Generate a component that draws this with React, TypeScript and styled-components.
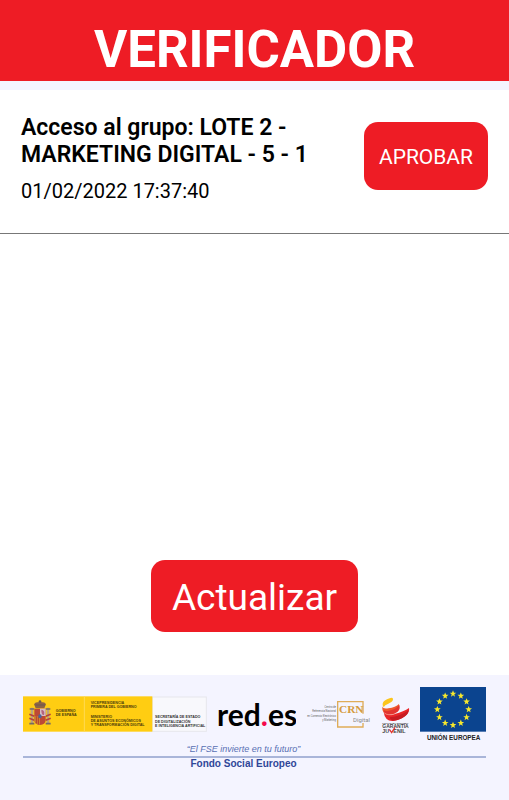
import React from 'react';
import styled, { createGlobalStyle } from 'styled-components';

const red = '#ee1c25';
const pale = '#f4f4ff';

const GlobalStyle = createGlobalStyle`
  * { box-sizing: border-box; }
  body { margin: 0; background: #fff; color: #000; font-family: Roboto, "Liberation Sans", sans-serif; }
`;

const Page = styled.div`
  display: flex;
  flex-direction: column;
  min-height: 100vh;
`;

const Header = styled.header`
  padding: 21px 16px 2px;
  background: ${red};
  border-bottom: 9px solid ${pale};
  text-align: center;
`;

const Title = styled.h1`
  margin: 0;
  color: #fff;
  font-size: 51px;
  line-height: 58px;
  font-weight: 700;
`;

const RequestList = styled.ul`
  flex: 1;
  margin: 0;
  padding: 0;
  list-style: none;
`;

const Request = styled.li`
  display: flex;
  align-items: flex-start;
  justify-content: space-between;
  gap: 32px;
  padding: 24px 21px 26px;
  border-bottom: 1px solid #777;
`;

const RequestInfo = styled.div`
  flex: 1;
  max-width: 300px;
`;

const RequestTitle = styled.h2`
  margin: 0 0 8px;
  font-size: 23px;
  line-height: 27px;
  font-weight: 600;
`;

const RequestDate = styled.time`
  display: block;
  font-size: 20px;
  line-height: 31px;
`;

const RequestAction = styled.div`
  padding-top: 8px;
`;

const Button = styled.button<{ $large?: boolean }>`
  padding: ${p => (p.$large ? '16px 21px 12px' : '22px 15px 20px')};
  border: 0;
  border-radius: 14px;
  background: ${red};
  color: #fff;
  font-family: inherit;
  font-size: ${p => (p.$large ? '37px' : '21px')};
  line-height: ${p => (p.$large ? '44px' : '26px')};
  cursor: pointer;
`;

const Actions = styled.div`
  display: flex;
  justify-content: center;
  padding-bottom: 43px;
`;

const Footer = styled.footer`
  padding: 12px 23px 30px;
  background: ${pale};
  font-family: "Liberation Sans", Arial, sans-serif;
`;

const Logos = styled.div`
  display: flex;
  justify-content: space-between;
  align-items: flex-start;
`;

const Logo = styled.svg`
  display: block;
  font-family: "Liberation Sans", Arial, sans-serif;
`;

const Slogan = styled.p<{ $strong?: boolean }>`
  margin: 0;
  padding-right: 22px;
  text-align: center;
  color: ${p => (p.$strong ? '#2f4698' : '#5870b3')};
  font-size: ${p => (p.$strong ? '10px' : '9px')};
  line-height: ${p => (p.$strong ? '12px' : '13px')};
  font-weight: ${p => (p.$strong ? 700 : 400)};
  font-style: ${p => (p.$strong ? 'normal' : 'italic')};
`;

const Rule = styled.hr`
  margin: 0;
  border: 0;
  height: 2px;
  background: #a9b5d9;
`;

const GovernmentLogo = () => (
  <Logo width="184" height="56" viewBox="0 0 552 168" role="img" aria-label="Gobierno de España">
    <rect x="388" y="30" width="162" height="103" fill="#f8f8fc" stroke="#e6e6ec" strokeWidth="3" />
    <rect y="28" width="388" height="106" fill="#ffcd12" />
    <path d="M184 28v106" stroke="#ffda55" strokeWidth="3" />
    <g>
      <path d="M23 62h8v49h-8zM71 62h8v49h-8z" fill="#bba27e" />
      <path d="M20 66h14M68 66h14M19 110h15M68 110h15" stroke="#776b61" strokeWidth="5" />
      <path d="M19 82l15 6M19 94l15 6M68 88l15-6M68 100l15-6" stroke="#b5413c" strokeWidth="5" />
      <path d="M33 52q4-8 13-6l5-5 5 5q10-2 13 6l-5 12H38z" fill="#8e6444" />
      <path d="M47 43h8M51 39v9M37 54h29" stroke="#6b5850" strokeWidth="3" />
      <path d="M34 65h34v34q0 13-17 15-17-2-17-15z" fill="#bd4936" />
      <path d="M51 65h17v22H51z" fill="#d6bdc4" />
      <path d="M34 88h17v25q-17-2-17-14z" fill="#ce872e" />
      <path d="M40 88v21M46 88v24" stroke="#b73a32" strokeWidth="3" />
      <path d="M55 68q12 2 8 16-8 2-8-16" fill="#b3647f" />
      <ellipse cx="51" cy="88" rx="5" ry="6" fill="#4a659d" />
    </g>
    <g fill="#4a3b0b" fontSize="11" fontWeight="700">
      <text x="98" y="76">GOBIERNO</text>
      <text x="98" y="88">DE ESPAÑA</text>
      <text x="203" y="52">VICEPRESIDENCIA</text>
      <text x="203" y="64">PRIMERA DEL GOBIERNO</text>
      <text x="203" y="93">MINISTERIO</text>
      <text x="203" y="106">DE ASUNTOS ECONÓMICOS</text>
      <text x="203" y="118">Y TRANSFORMACIÓN DIGITAL</text>
    </g>
    <g fill="#333" fontSize="11" fontWeight="700">
      <text x="396" y="94">SECRETARÍA DE ESTADO</text>
      <text x="396" y="107">DE DIGITALIZACIÓN</text>
      <text x="396" y="120">E INTELIGENCIA ARTIFICIAL</text>
    </g>
  </Logo>
);

const RedLogo = () => (
  <Logo width="79" height="56" viewBox="0 0 79 56" role="img" aria-label="red.es">
    <text y="39" fontFamily="Lato" fontSize="30" fontWeight="700">
      red<tspan fill="#f5074b">.</tspan>es
    </text>
  </Logo>
);

const CrnLogo = () => (
  <Logo width="66" height="56" viewBox="0 0 198 168" role="img" aria-label="CRN Digital">
    <g fill="#666" fontSize="8" textAnchor="end" fontFamily="Roboto">
      <text x="93" y="63">Centro de</text>
      <text x="93" y="76">Referencia Nacional</text>
      <text x="93" y="89">en Comercio Electrónico</text>
      <text x="93" y="102">y Marketing</text>
    </g>
    <path d="M174 80V44H98v76h76v-12" fill="none" stroke="#dfac58" strokeWidth="4" />
    <text x="102" y="77" fill="#d49b40" fontFamily="Liberation Serif" fontSize="34" fontWeight="700">CRN</text>
    <text x="144" y="104" fill="#888" fontFamily="Roboto" fontSize="18">Digital</text>
  </Logo>
);

const GuaranteeLogo = () => (
  <Logo width="30" height="56" viewBox="0 0 90 168" role="img" aria-label="Garantía Juvenil">
    <path d="M5 55Q3 43 18 37q17-9 18-1 1 8-14 14-11 3-14 11z" fill="#fbc51d" />
    <path d="M4 58q2 9 18 6 22-3 32-13 3 13-11 21-19 11-33 6-7-5-6-20" fill="#ee5a2c" />
    <path d="M8 70q9 5 22 0 18-6 25-16 4 12-5 20-14 12-32 9-9-3-10-13" fill="#e23430" />
    <path d="M8 76q10 12 33 5 28-7 43-18 3 14-12 24-17 14-38 15-22 0-26-26" fill="#e82529" />
    <path d="M26 91q28-1 57-21-1 14-20 24-16 8-28 7-8-2-9-10" fill="#c71b22" />
    <path d="M10 78q12 9 31 3" fill="none" stroke="#f8a08c" strokeWidth="2" />
    <g fill="#444" fontWeight="700">
      <text x="4" y="110" fontSize="7">PROGRAMA EUROPEO</text>
      <text x="4" y="123" fontSize="15">GARANTÍA</text>
      <text x="4" y="138" fontSize="16">JU</text>
      <text x="37" y="138" fontSize="16">ENIL</text>
    </g>
    <path d="M25 127l7 10 10-16" fill="none" stroke="#e23430" strokeWidth="4" />
  </Logo>
);

const starAngles = Array.from({ length: 12 }, (_, i) => (i * Math.PI) / 6);

const EuropeLogo = () => (
  <Logo width="66" height="56" viewBox="0 0 198 168" role="img" aria-label="Unión Europea">
    <rect width="198" height="134" fill="#0b448f" />
    {starAngles.map(a => (
      <path
        key={a}
        transform={`translate(${99 + 47 * Math.sin(a)} ${67 - 47 * Math.cos(a)})`}
        d="M0-10 3-3H10L4 2 6 9 0 5-6 9-4 2-10-3H-3Z"
        fill="#f8e82c"
      />
    ))}
    <text x="101" y="160" textAnchor="middle" fill="#222" fontSize="19" fontWeight="700">UNIÓN EUROPEA</text>
  </Logo>
);

const requests = [
  { title: 'Acceso al grupo: LOTE 2 - MARKETING DIGITAL - 5 - 1', date: '01/02/2022 17:37:40', iso: '2022-02-01T17:37:40' },
];

export default function App() {
  return (
    <Page>
      <GlobalStyle />
      <Header>
        <Title>VERIFICADOR</Title>
      </Header>
      <RequestList>
        {requests.map(r => (
          <Request key={r.iso}>
            <RequestInfo>
              <RequestTitle>{r.title}</RequestTitle>
              <RequestDate dateTime={r.iso}>{r.date}</RequestDate>
            </RequestInfo>
            <RequestAction>
              <Button type="button">APROBAR</Button>
            </RequestAction>
          </Request>
        ))}
      </RequestList>
      <Actions>
        <Button type="button" $large>Actualizar</Button>
      </Actions>
      <Footer>
        <Logos>
          <GovernmentLogo />
          <RedLogo />
          <CrnLogo />
          <GuaranteeLogo />
          <EuropeLogo />
        </Logos>
        <Slogan>“El FSE invierte en tu futuro”</Slogan>
        <Rule />
        <Slogan $strong>Fondo Social Europeo</Slogan>
      </Footer>
    </Page>
  );
}
